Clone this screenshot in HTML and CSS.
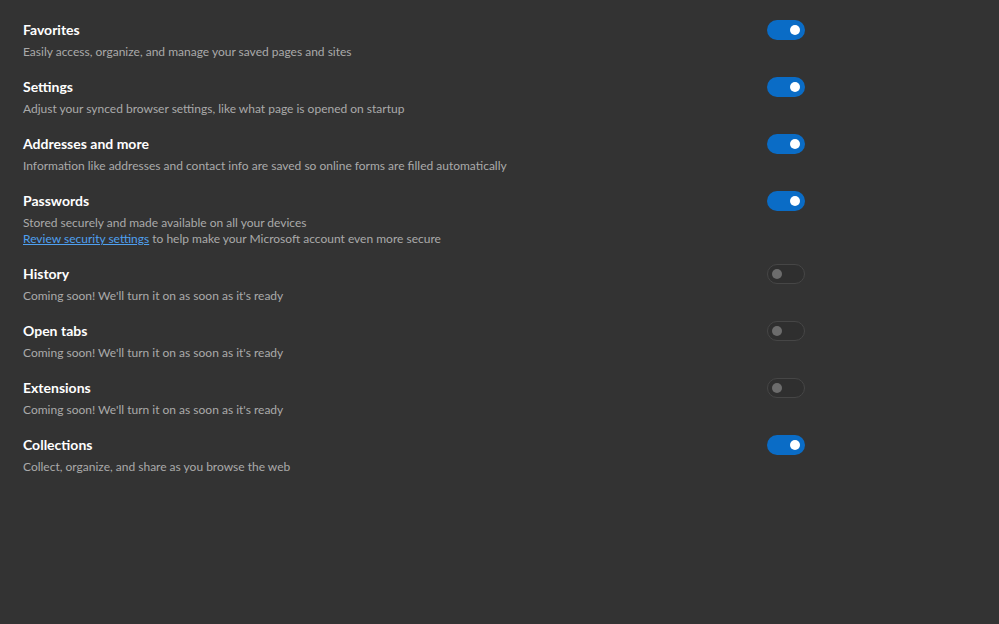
FILE: index.html
```html
<!DOCTYPE html>
<html lang="en">
<head>
  <meta charset="UTF-8">
  <title>Sync settings</title>
  <link rel="stylesheet" href="styles.css">
</head>
<body>
  <div class="sync-list">
    <div class="sync-row">
      <div class="sync-text">
        <div class="sync-title">Favorites</div>
        <div class="sync-desc">Easily access, organize, and manage your saved pages and sites</div>
      </div>
      <div class="toggle on"><span class="knob"></span></div>
    </div>
    <div class="sync-row">
      <div class="sync-text">
        <div class="sync-title">Settings</div>
        <div class="sync-desc">Adjust your synced browser settings, like what page is opened on startup</div>
      </div>
      <div class="toggle on"><span class="knob"></span></div>
    </div>
    <div class="sync-row">
      <div class="sync-text">
        <div class="sync-title">Addresses and more</div>
        <div class="sync-desc">Information like addresses and contact info are saved so online forms are filled automatically</div>
      </div>
      <div class="toggle on"><span class="knob"></span></div>
    </div>
    <div class="sync-row">
      <div class="sync-text">
        <div class="sync-title">Passwords</div>
        <div class="sync-desc">Stored securely and made available on all your devices</div>
        <div class="sync-desc"><a href="#">Review security settings</a> to help make your Microsoft account even more secure</div>
      </div>
      <div class="toggle on"><span class="knob"></span></div>
    </div>
    <div class="sync-row">
      <div class="sync-text">
        <div class="sync-title">History</div>
        <div class="sync-desc">Coming soon! We'll turn it on as soon as it's ready</div>
      </div>
      <div class="toggle off"><span class="knob"></span></div>
    </div>
    <div class="sync-row">
      <div class="sync-text">
        <div class="sync-title">Open tabs</div>
        <div class="sync-desc">Coming soon! We'll turn it on as soon as it's ready</div>
      </div>
      <div class="toggle off"><span class="knob"></span></div>
    </div>
    <div class="sync-row">
      <div class="sync-text">
        <div class="sync-title">Extensions</div>
        <div class="sync-desc">Coming soon! We'll turn it on as soon as it's ready</div>
      </div>
      <div class="toggle off"><span class="knob"></span></div>
    </div>
    <div class="sync-row">
      <div class="sync-text">
        <div class="sync-title">Collections</div>
        <div class="sync-desc">Collect, organize, and share as you browse the web</div>
      </div>
      <div class="toggle on"><span class="knob"></span></div>
    </div>
  </div>
</body>
</html>
```

FILE: styles.css
```css
body {
  margin: 0;
  padding: 20px 23px;
  background-color: #333333;
  font-family: Lato, "Open Sans", sans-serif;
  color: #ffffff;
}
.sync-list {
  width: 782px;
  display: flex;
  flex-direction: column;
  gap: 17px;
}
.sync-row {
  display: flex;
  justify-content: space-between;
  align-items: flex-start;
}
.sync-text {
  display: flex;
  flex-direction: column;
}
.sync-title {
  font-size: 14px;
  font-weight: 700;
  line-height: 20px;
  margin-bottom: 4px;
}
.sync-desc {
  font-size: 12px;
  line-height: 16px;
  color: #aaaaaa;
}
.sync-desc a {
  color: #4fa0f0;
  text-decoration: underline;
}
.toggle {
  width: 38px;
  height: 20px;
  border-radius: 10px;
  box-sizing: border-box;
  display: flex;
  align-items: center;
  padding: 0 5px;
}
.toggle .knob {
  width: 10px;
  height: 10px;
  border-radius: 50%;
}
.toggle.on {
  background-color: #0a6cc6;
  justify-content: flex-end;
}
.toggle.on .knob {
  background-color: #ffffff;
}
.toggle.off {
  border: 1px solid #464646;
  background-color: #2f2f2f;
  padding: 0 4px;
}
.toggle.off .knob {
  background-color: #6c6c6c;
}
```
